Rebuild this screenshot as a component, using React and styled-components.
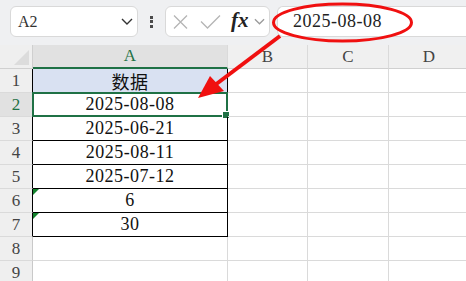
import React from "react";
import styled, { createGlobalStyle, css } from "styled-components";

const GlobalStyle = createGlobalStyle`
  html, body { margin: 0; padding: 0; background: #fff; overflow: hidden; }
  * { box-sizing: border-box; }
`;

const GREEN = "#1f7145";
const GRID = "#dadada";
const SERIF = `"Liberation Serif", "Noto Sans CJK SC", serif`;

const Page = styled.div`
  position: relative;
  width: 466px;
  height: 281px;
  overflow: hidden;
  display: flex;
  flex-direction: column;
  font-family: ${SERIF};
`;

const TopBar = styled.div`
  height: 45px;
  flex: none;
  background: #eff0f2;
  display: flex;
  align-items: flex-start;
  padding: 6px 0 0 10px;
`;

const Box = styled.div`
  height: 31px;
  background: #fff;
  border: 1px solid #d9d9d9;
  border-radius: 6px;
  display: flex;
  align-items: center;
`;

const NameBox = styled(Box)`
  width: 128px;
  justify-content: space-between;
  padding: 0 4px 0 7px;
  font-family: "Liberation Serif", serif;
  font-size: 16px;
  color: #333;
`;

const Dots = styled.div`
  width: 27px;
  height: 31px;
  display: flex;
  flex-direction: column;
  align-items: center;
  justify-content: center;
  gap: 1.5px;
  span {
    width: 3px;
    height: 3px;
    background: #4a4a4a;
  }
`;

const IconBox = styled(Box)`
  width: 105px;
  padding-left: 7px;
`;

const Fx = styled.span`
  font-family: "Liberation Serif", serif;
  font-style: italic;
  font-weight: bold;
  font-size: 21px;
  color: #222;
  margin: -3px 5px 0 10px;
`;

const FormulaBox = styled(Box)`
  margin-left: 7px;
  flex: 1;
  border-right: none;
  border-radius: 6px 0 0 6px;
  padding-left: 15px;
  font-size: 18px;
  letter-spacing: 0.5px;
  color: #222;
`;

const Sheet = styled.div`
  display: grid;
  grid-template-columns: 33px 195px 80px 81px 81px;
  grid-auto-rows: 24px;
`;

const Cell = styled.div`
  position: relative;
  display: flex;
  align-items: center;
  justify-content: center;
  border-right: 1px solid ${GRID};
  border-bottom: 1px solid ${GRID};
  font-size: 18px;
  letter-spacing: 0.5px;
  color: #111;
  ${(p) => p.$table && css`
    border-right-color: #000;
    border-bottom-color: #000;
  `}
  ${(p) => p.$fill && css`background: ${p.$fill};`}
  ${(p) => p.$textFlag && css`
    &::before {
      content: "";
      position: absolute;
      top: 0;
      left: 0;
      width: 0;
      height: 0;
      border-top: 6px solid #12822c;
      border-right: 6px solid transparent;
    }
  `}
`;

const Selection = styled.div`
  position: absolute;
  top: -1px;
  left: -1px;
  right: -1px;
  bottom: -1px;
  border: 2px solid ${GREEN};
  pointer-events: none;
  &::after {
    content: "";
    position: absolute;
    right: -4px;
    bottom: -4px;
    width: 6px;
    height: 6px;
    background: ${GREEN};
    border: 1px solid #fff;
  }
`;

const ColHead = styled.div`
  display: flex;
  align-items: center;
  justify-content: center;
  background: ${(p) => (p.$active ? "#e1e1e1" : "#f0f0f0")};
  border-right: 1px solid ${GRID};
  border-bottom: ${(p) => (p.$active ? `2px solid ${GREEN}` : "1px solid #d0d0d0")};
  color: ${(p) => (p.$active ? GREEN : "#444")};
  font-size: 17px;
`;

const Corner = styled.div`
  position: relative;
  background: #efefef;
  border-right: 1px solid #cfcfcf;
  border-bottom: 1px solid #d0d0d0;
  &::after {
    content: "";
    position: absolute;
    right: 3px;
    bottom: 3px;
    width: 0;
    height: 0;
    border-bottom: 15px solid #dcdcdc;
    border-left: 15px solid transparent;
  }
`;

const RowHead = styled.div`
  display: flex;
  align-items: center;
  justify-content: center;
  background: ${(p) => (p.$active ? "#e1e1e1" : "#efefef")};
  border-right: 1px solid ${(p) => (p.$table ? "#000" : "#c9c9c9")};
  border-bottom: 1px solid ${GRID};
  color: ${(p) => (p.$active ? GREEN : "#444")};
  font-size: 17px;
`;

const Overlay = styled.svg`
  position: absolute;
  left: 0;
  top: 0;
  pointer-events: none;
`;

const values = ["数据", "2025-08-08", "2025-06-21", "2025-08-11", "2025-07-12", "6", "30", "", ""];

function CloseIcon() {
  return (
    <svg width="15" height="14" viewBox="0 0 15 14">
      <path d="M1 0.5 L14 13.5 M14 0.5 L1 13.5" stroke="#b5b5b5" strokeWidth="1.3" fill="none" />
    </svg>
  );
}

function CheckIcon() {
  return (
    <svg width="21" height="14" viewBox="0 0 21 14" style={{ marginLeft: 12 }}>
      <path d="M1 6.5 L7.5 13 L20 0.5" stroke="#b5b5b5" strokeWidth="1.3" fill="none" />
    </svg>
  );
}

function Chevron({ color = "#333", w = 12 }) {
  return (
    <svg width={w} height="7" viewBox="0 0 12 7">
      <path d="M1 1 L6 6 L11 1" stroke={color} strokeWidth="1.4" fill="none" />
    </svg>
  );
}

export default function App() {
  return (
    <Page>
      <GlobalStyle />
      <TopBar>
        <NameBox>
          <span>A2</span>
          <Chevron />
        </NameBox>
        <Dots>
          <span />
          <span />
          <span />
        </Dots>
        <IconBox>
          <CloseIcon />
          <CheckIcon />
          <Fx>fx</Fx>
          <Chevron color="#9a9a9a" w={11} />
        </IconBox>
        <FormulaBox>2025-08-08</FormulaBox>
      </TopBar>

      <Sheet>
        <Corner />
        <ColHead $active>A</ColHead>
        <ColHead>B</ColHead>
        <ColHead>C</ColHead>
        <ColHead>D</ColHead>
        {values.map((v, i) => {
          const row = i + 1;
          const inTable = row <= 7;
          return (
            <React.Fragment key={row}>
              <RowHead $active={row === 2} $table={inTable}>{row}</RowHead>
              <Cell
                $table={inTable}
                $fill={row === 1 ? "#d9e1f2" : null}
                $textFlag={row === 6 || row === 7}
              >
                {v}
                {row === 2 && <Selection />}
              </Cell>
              <Cell />
              <Cell />
              <Cell />
            </React.Fragment>
          );
        })}
      </Sheet>

      <Overlay width="466" height="281" viewBox="0 0 466 281">
        <ellipse cx="342.5" cy="22.5" rx="69" ry="18.5" fill="none" stroke="#f01010" strokeWidth="3" />
        <line x1="280" y1="36" x2="215" y2="85" stroke="#f01010" strokeWidth="4" />
        <polygon points="198,98 210,76 224,91" fill="#f01010" />
      </Overlay>
    </Page>
  );
}
